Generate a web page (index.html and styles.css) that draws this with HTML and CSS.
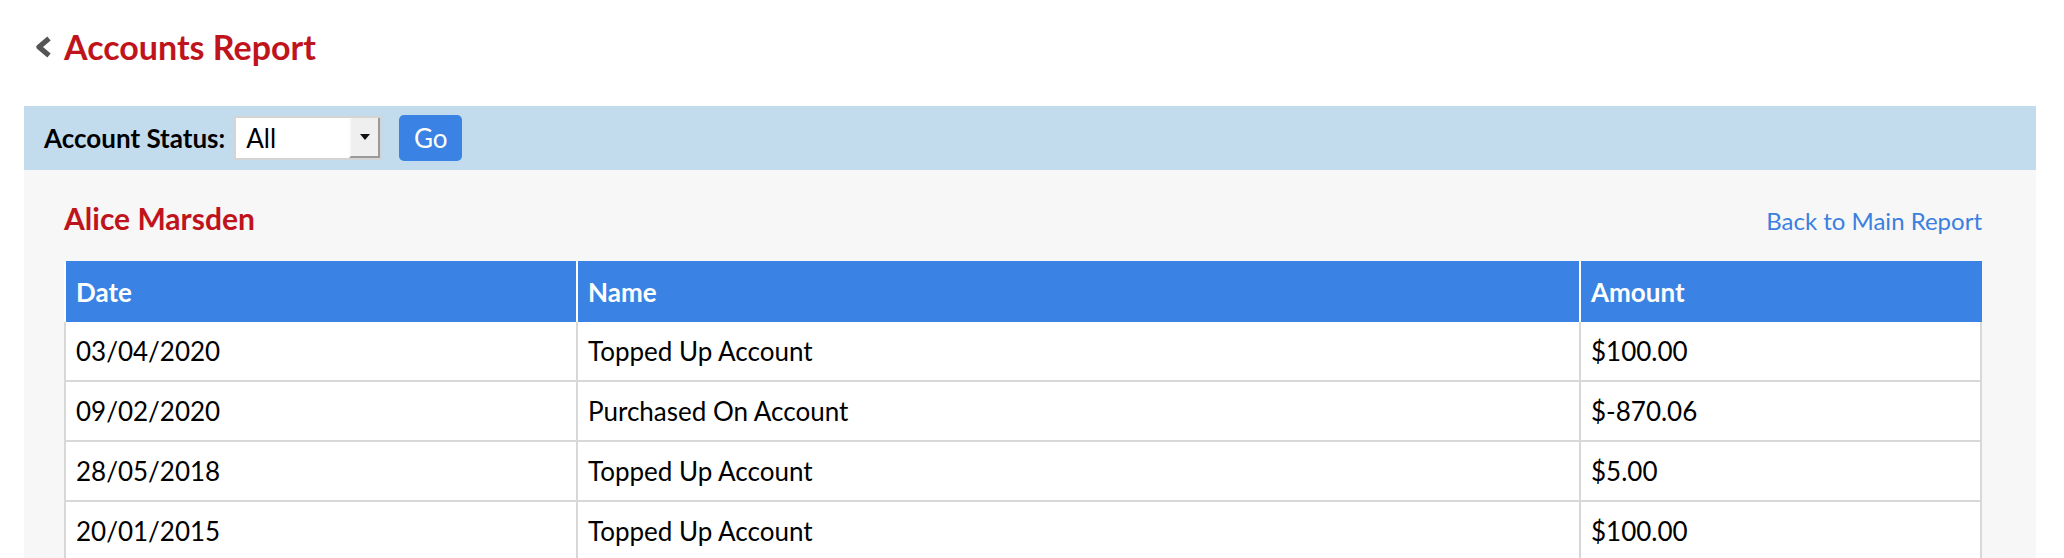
FILE: index.html
```html
<!DOCTYPE html>
<html lang="en">
<head>
  <meta charset="UTF-8">
  <title>Accounts Report</title>
  <link rel="stylesheet" href="styles.css">
</head>
<body>

  <div class="page-title">
    <a class="back-arrow" href="#">
      <svg width="18" height="22" viewBox="0 0 18 22">
        <polyline points="15,2.5 5,11 15,19.5" fill="none" stroke="#555" stroke-width="5.2" stroke-linejoin="round"/>
      </svg>
    </a>
    <h1>Accounts Report</h1>
  </div>

  <div class="filter-bar">
    <label class="filter-label">Account Status:</label>
    <div class="select-box">
      <select class="select-value">
        <option>All</option>
        <option>Active</option>
        <option>Inactive</option>
      </select>
      <span class="select-arrow"></span>
    </div>
    <button class="go-btn">Go</button>
  </div>

  <div class="report-panel">
    <div class="report-head">
      <h2>Alice Marsden</h2>
      <a class="back-link" href="#">Back to Main Report</a>
    </div>

    <table class="report-table">
      <colgroup>
        <col class="col-date">
        <col class="col-name">
        <col class="col-amount">
      </colgroup>
      <thead>
        <tr>
          <th>Date</th>
          <th>Name</th>
          <th>Amount</th>
        </tr>
      </thead>
      <tbody>
        <tr>
          <td>03/04/2020</td>
          <td>Topped Up Account</td>
          <td>$100.00</td>
        </tr>
        <tr>
          <td>09/02/2020</td>
          <td>Purchased On Account</td>
          <td>$-870.06</td>
        </tr>
        <tr>
          <td>28/05/2018</td>
          <td>Topped Up Account</td>
          <td>$5.00</td>
        </tr>
        <tr>
          <td>20/01/2015</td>
          <td>Topped Up Account</td>
          <td>$100.00</td>
        </tr>
      </tbody>
    </table>
  </div>

</body>
</html>
```

FILE: styles.css
```css
body {
  margin: 0;
  padding: 0 28px 0 24px;
  font-family: Lato, "Open Sans", sans-serif;
  color: #000;
  background: #fff;
}
.page-title {
  display: flex;
  align-items: center;
  gap: 12px;
  height: 46px;
  margin: 24px 0 36px 10px;
}
.back-arrow {
  display: flex;
}
.page-title h1 {
  margin: 0;
  font-size: 34px;
  line-height: 46px;
  font-weight: bold;
  color: #c0141d;
}
.filter-bar {
  display: flex;
  align-items: center;
  height: 64px;
  padding-left: 20px;
  background: #c2dcee;
}
.filter-label {
  font-size: 26px;
  font-weight: bold;
  margin-right: 9px;
}
.select-box {
  display: flex;
  width: 148px;
  height: 44px;
  box-sizing: border-box;
  border: 2px solid #d4d4d4;
  background: #fff;
}
.select-value {
  flex: 1;
  min-width: 0;
  appearance: none;
  -webkit-appearance: none;
  border: none;
  outline: none;
  background: #fff;
  font-family: inherit;
  font-size: 26px;
  color: #000;
  padding: 0 0 0 10px;
}
.select-arrow {
  width: 27px;
  display: flex;
  align-items: center;
  justify-content: center;
  background: #efefef;
  border-left: 2px solid #fafafa;
  border-right: 2px solid #9a9a9a;
  border-bottom: 2px solid #9a9a9a;
}
.select-arrow::after {
  content: "";
  border-left: 5px solid transparent;
  border-right: 5px solid transparent;
  border-top: 6px solid #111;
}
.go-btn {
  margin-left: 17px;
  width: 63px;
  height: 46px;
  border: none;
  border-radius: 5px;
  background: #3a83e4;
  color: #fff;
  font-family: inherit;
  font-size: 26px;
  cursor: pointer;
}
.report-panel {
  background: #f7f7f7;
  padding: 29px 54px 30px 40px;
}
.report-head {
  display: flex;
  justify-content: space-between;
  align-items: baseline;
  margin-bottom: 24px;
}
.report-head h2 {
  margin: 0;
  font-size: 30px;
  line-height: 38px;
  font-weight: bold;
  color: #c0141d;
}
.back-link {
  font-size: 24px;
  color: #3b7fdf;
  text-decoration: none;
}
.report-table {
  width: 100%;
  table-layout: fixed;
  border-collapse: separate;
  border-spacing: 0;
  font-size: 26px;
}
.col-date {
  width: 514px;
}
.col-name {
  width: 1003px;
}
.report-table th,
.report-table td {
  box-sizing: border-box;
  height: 60px;
  padding: 0 10px;
  text-align: left;
  white-space: nowrap;
}
.report-table th {
  height: 61px;
  background: #3a83e4;
  color: #fff;
  font-weight: bold;
  border-right: 2px solid #fff;
}
.report-table th:first-child {
  border-left: 2px solid #fff;
}
.report-table th:last-child {
  border-right-color: #3a83e4;
}
.report-table td {
  background: #fff;
  border-right: 2px solid #d8d8d8;
  border-bottom: 2px solid #d8d8d8;
}
.report-table td:first-child {
  border-left: 2px solid #d8d8d8;
}
```
